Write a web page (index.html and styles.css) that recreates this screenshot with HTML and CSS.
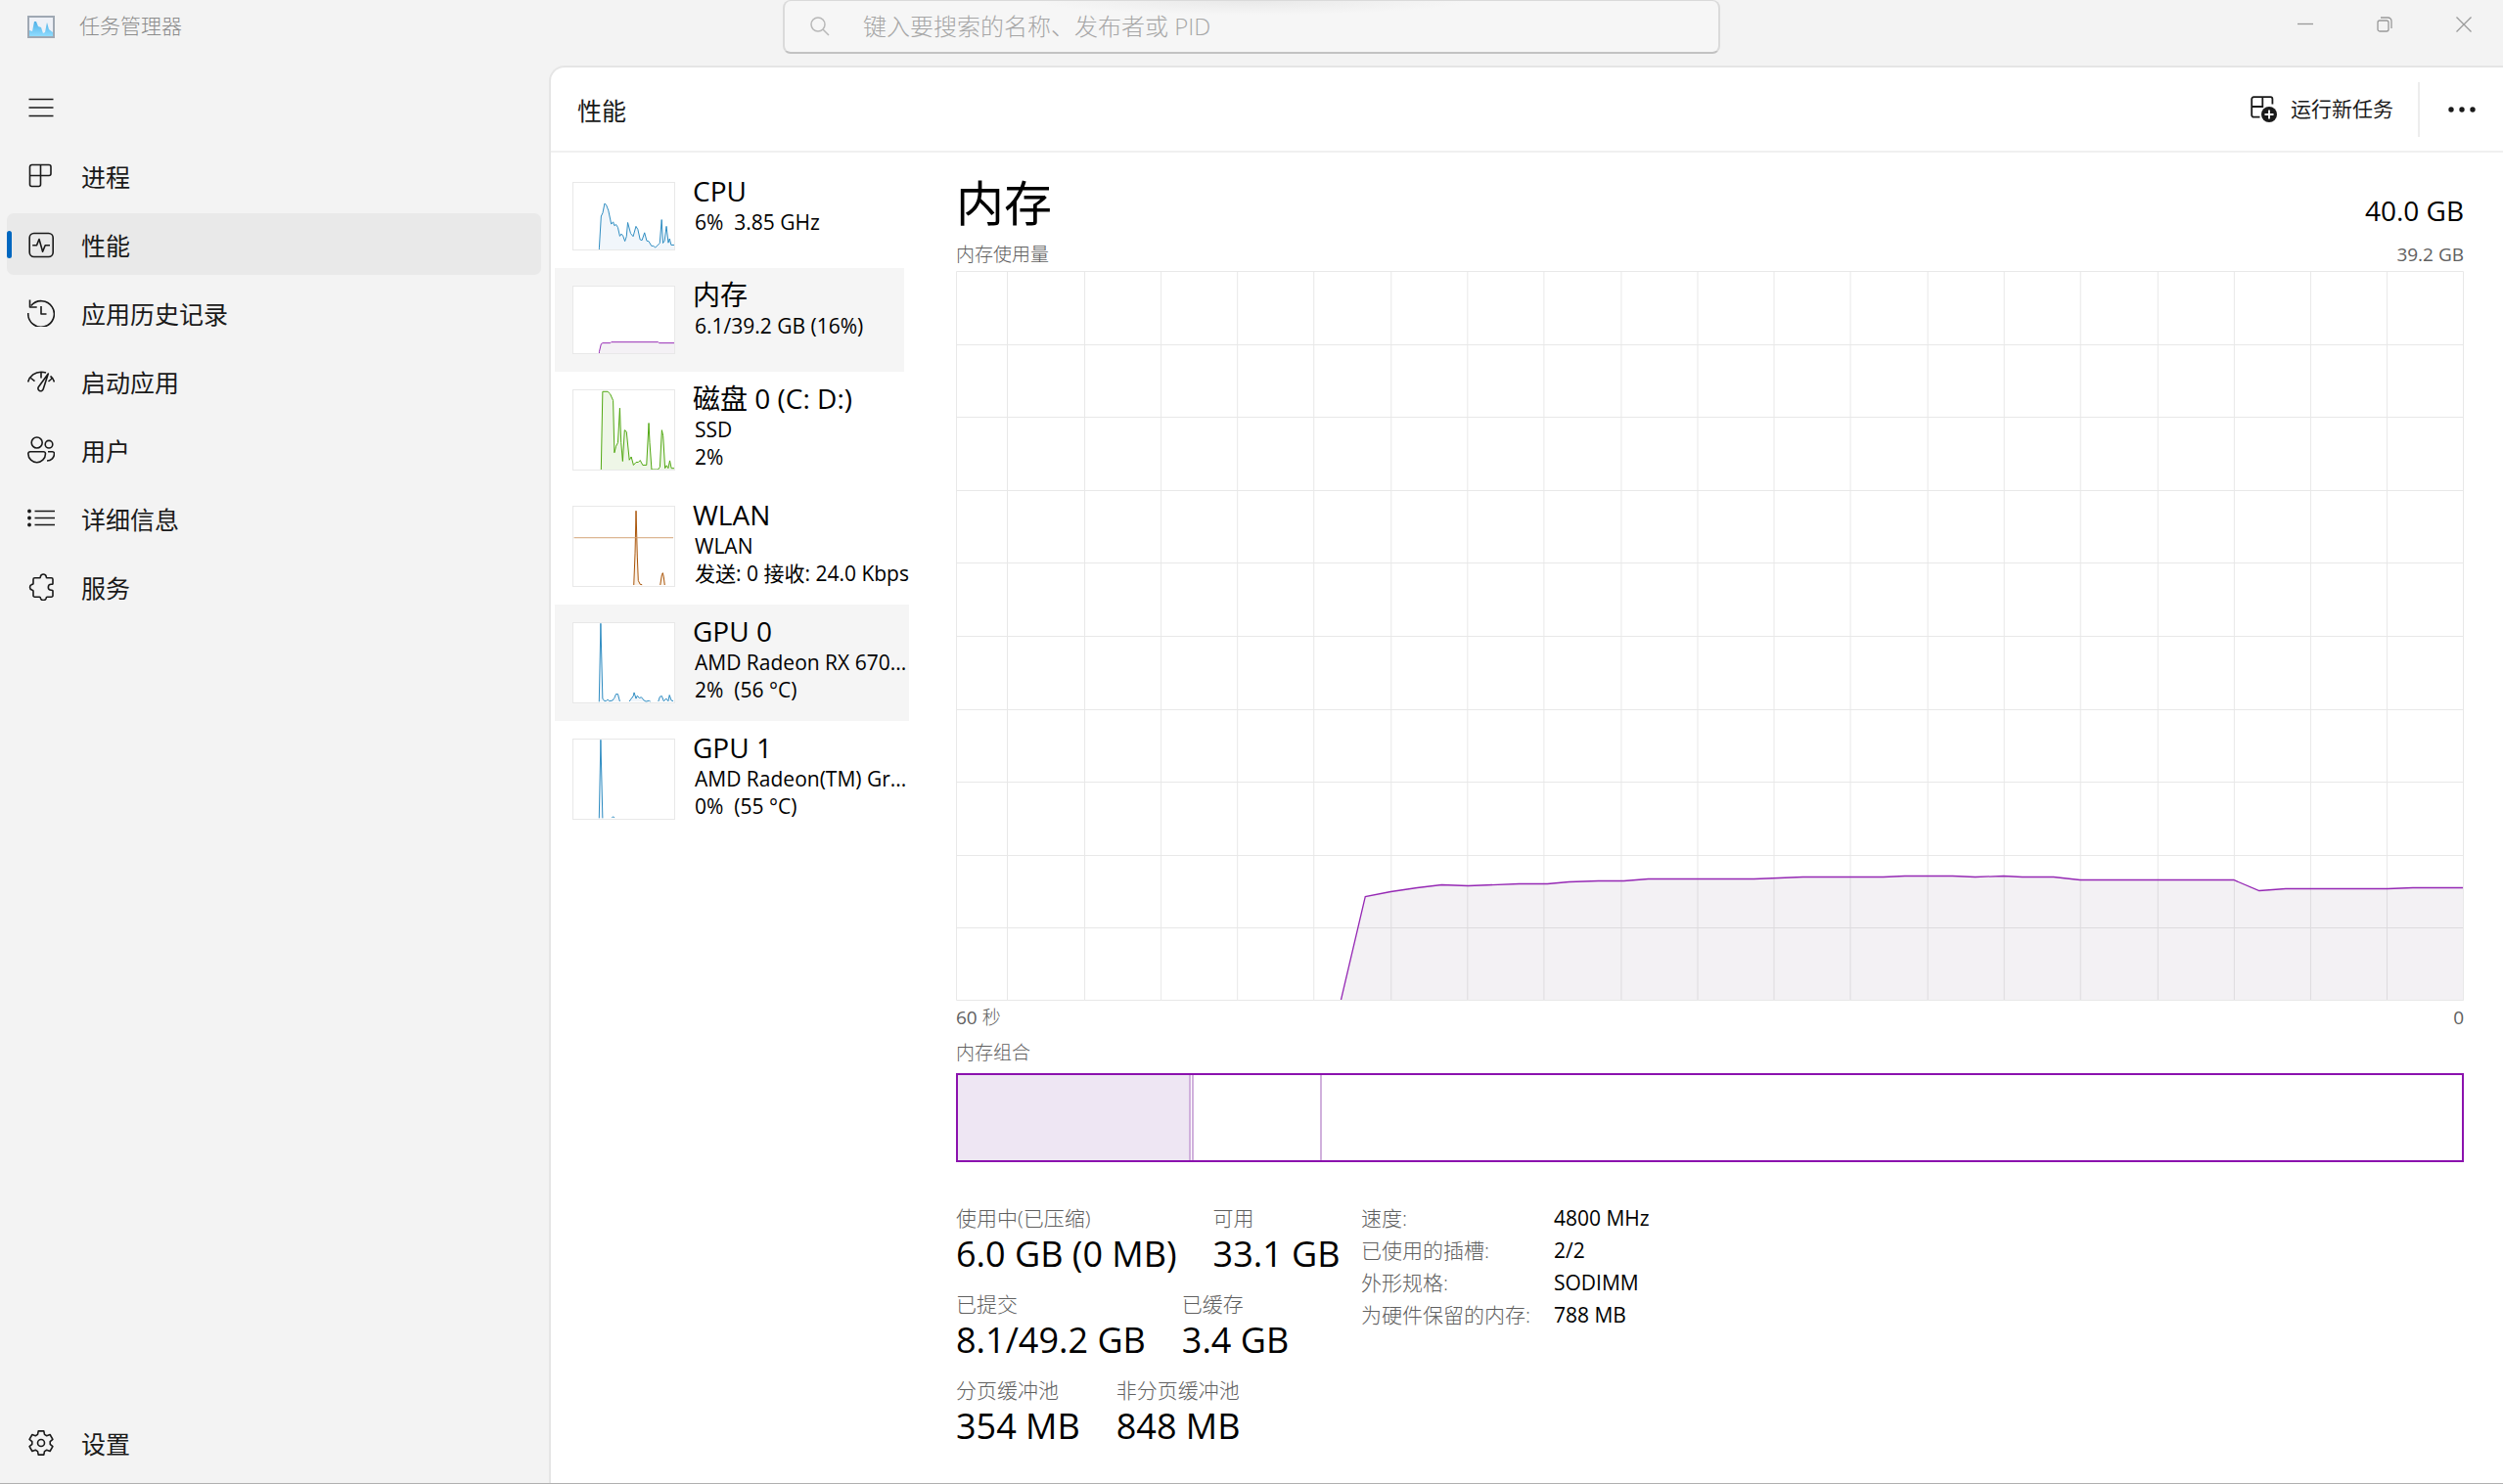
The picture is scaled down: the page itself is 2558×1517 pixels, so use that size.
FILE: index.html
```html
<!DOCTYPE html>
<html lang="zh-CN">
<head>
<meta charset="utf-8">
<meta name="viewport" content="width=device-width, initial-scale=1">
<title>任务管理器</title>
<link rel="stylesheet" href="styles.css">
</head>
<body>
<div class="window">
  <header class="titlebar">
    <div class="brand">
      <svg class="brand-icon" viewBox="0 0 28 23" aria-hidden="true">
        <defs><linearGradient id="sky" x1="0" y1="0" x2="0" y2="1"><stop offset="0" stop-color="#4fb0e6"/><stop offset="1" stop-color="#8fdcff"/></linearGradient></defs>
        <rect x="1" y="1" width="26" height="21" fill="#eef1f7" stroke="#9fa8b3" stroke-width="2"/>
        <path d="M2 15l3 1 2-10h2l2 5 3 1 2 6 2-1 2-10 2 7 4 3v4H2z" fill="url(#sky)"/>
      </svg>
      <span>任务管理器</span>
    </div>
    <label class="search">
      <svg class="search-icon" viewBox="0 0 20 20" aria-hidden="true"><circle cx="8" cy="8" r="7"/><path d="M13 13l6 6"/></svg>
      <input type="search" aria-label="搜索" placeholder="键入要搜索的名称、发布者或 PID">
    </label>
    <div class="caption">
      <button type="button" aria-label="最小化"><svg viewBox="0 0 16 16"><path d="M0 7.500H16"/></svg></button>
      <button type="button" aria-label="还原"><svg viewBox="0 0 16 16"><rect x="1" y="4" width="11" height="11" rx="2"/><path d="M4 1h7.500a3.500 3.500 0 0 1 3.500 3.500V12"/></svg></button>
      <button type="button" aria-label="关闭"><svg viewBox="0 0 16 16"><path d="M.5.5l15 15M15.500.5l-15 15"/></svg></button>
    </div>
  </header>

  <div class="body">
    <nav class="nav">
      <button type="button" class="nav-item" aria-label="导航"><svg viewBox="0 0 28 28"><path d="M1.500 5.500h25M1.500 14h25M1.500 22.500h25"/></svg></button>
      <a href="#" class="nav-item"><svg viewBox="0 0 28 28"><path d="M4.500 2.500H22a2 2 0 0 1 2 2v7a2 2 0 0 1-2 2H13.500v9a2 2 0 0 1-2 2h-7a2 2 0 0 1-2-2v-18a2 2 0 0 1 2-2zM13.500 2.500v11H2.500"/></svg><span>进程</span></a>
      <a href="#" class="nav-item active" aria-current="page"><svg viewBox="0 0 28 28"><rect x="2.200" y="2.500" width="24" height="24" rx="4.500"/><path d="M5.200 14.800h4.300L12 8.500l3.600 12.700 2.600-6.400H23"/></svg><span>性能</span></a>
      <a href="#" class="nav-item"><svg viewBox="0 0 28 28"><path d="M.8 14A13.300 13.300 0 1 0 3.800 6.500M2.500.6V8h7.200M14 7v8h5.500"/></svg><span>应用历史记录</span></a>
      <a href="#" class="nav-item"><svg viewBox="0 0 28 28"><path d="M.6 14.500C2.500 8 8 4.200 14 4.200c2 0 3.500.3 5 .8M3.500 10.500l4 3.200M14 4.500v6M21.300 6L11.400 19.500a2.700 2.700 0 1 0 4.800 2.300zM23.500 8.500c2 1.500 3.300 3.500 4 6M25 11l-3.500 3"/></svg><span>启动应用</span></a>
      <a href="#" class="nav-item"><svg viewBox="0 0 28 28"><circle cx="9.700" cy="6.500" r="5.500"/><circle cx="22" cy="8.200" r="3.800"/><path d="M2.800 15.800h13.700a2 2 0 0 1 2 2c0 5.200-4.300 8.900-8.800 8.900S.8 23 .8 17.800a2 2 0 0 1 2-2zM21 15.800h4.500a2 2 0 0 1 2 2c0 4-3 7.200-7.500 7.200"/></svg><span>用户</span></a>
      <a href="#" class="nav-item"><svg viewBox="0 0 28 28"><path d="M7.500 6.500H28M7.500 13.500H28M7.500 20.500H28"/><g class="solid"><circle cx="2" cy="6.500" r="1.900"/><circle cx="2" cy="13.500" r="1.900"/><circle cx="2" cy="20.500" r="1.900"/></g></svg><span>详细信息</span></a>
      <a href="#" class="nav-item"><svg viewBox="0 0 28 28"><path d="M7.500 4.800h5c1 0 .8-1 .9-1.600a3 3 0 0 1 5.800 0c.1.600-.1 1.600.9 1.600h4.400a1.500 1.500 0 0 1 1.500 1.500v4.200c0 1-1 .8-1.700.8a3 3 0 0 0 0 6c.7 0 1.700-.1 1.700.8v4.600a1.500 1.500 0 0 1-1.500 1.500h-4.400c-1 0-.9 1-1 1.500a3 3 0 0 1-5.600 0c-.1-.6 0-1.500-1-1.500h-5A1.500 1.500 0 0 1 6 22.700v-4.500c0-1-.8-.9-1.400-1.100a3 3 0 0 1 0-5.700c.6-.1 1.400 0 1.400-1V6.300a1.500 1.500 0 0 1 1.500-1.500z"/></svg><span>服务</span></a>
      <a href="#" class="nav-item settings"><svg viewBox="0 0 28 28"><circle cx="14" cy="14" r="3.500"/><path d="M16.800 1.900l.7 3.500 2.200 1.300 3.400-1.200 2.800 4.900-2.700 2.300v2.600l2.700 2.300-2.800 4.900-3.400-1.200-2.200 1.300-.7 3.500h-5.600l-.7-3.500-2.200-1.300-3.400 1.200-2.800-4.900 2.700-2.300v-2.600l-2.700-2.300 2.800-4.900 3.400 1.200 2.200-1.300.7-3.500z"/></svg><span>设置</span></a>
    </nav>

    <main class="panel">
      <header class="toolbar">
        <h1>性能</h1>
        <button type="button" class="run">
          <svg viewBox="0 0 28 28" aria-hidden="true"><path d="M9.500 21.700H3.200a2 2 0 0 1-2-2V3.200a2 2 0 0 1 2-2h17.200a2 2 0 0 1 2 2V8.500M12.300 1.200V11H1.200"/><circle class="disc" cx="19" cy="19" r="8"/><path class="plus" d="M14.500 19h9M19 14.500v9"/></svg>
          <span>运行新任务</span>
        </button>
        <button type="button" class="more" aria-label="更多"><svg viewBox="0 0 28 6"><circle cx="3" cy="3" r="2.700"/><circle cx="14" cy="3" r="2.700"/><circle cx="25" cy="3" r="2.700"/></svg></button>
      </header>

      <div class="content">
        <div class="devices">
          <button type="button" class="device cpu">
            <svg class="thumb" viewBox="75 108 315 210"><path d="M155 314L161 213 166 203 172 173 177 177 184 195 193 238 199 231 203 243 208 239 214 249 220 276 225 269 230 275 236 292 241 277 245 233 254 267 262 277 271 245 277 255 284 287 290 289 298 265 305 291 311 292 320 307 326 307 332 312 346 298 352 224 356 298 361 291 367 245 373 297 377 284 382 304 396 304 396 330 155 330z"/></svg>
            <span class="info"><b>CPU</b><span>6%&nbsp; 3.85 GHz</span></span>
          </button>
          <button type="button" class="device mem selected">
            <svg class="thumb" viewBox="75 426 315 210"><path d="M155 632L161 607 166 604 190 604 193 601 341 601 344 604 399 604 399 650 155 650z"/></svg>
            <span class="info"><b>内存</b><span>6.1/39.2 GB (16%)</span></span>
          </button>
          <button type="button" class="device disk">
            <svg class="thumb tall" viewBox="75 744 315 249"><path d="M161 1005L166 748 182 748 190 756 199 776 203 940 208 920 214 908 220 800 224 908 229 967 235 869 241 874 250 963 256 953 263 979 271 970 278 970 284 964 292 979 304 979 311 847 314 908 320 993 340 993 346 985 352 869 356 887 362 989 367 980 372 989 377 965 382 989 398 989 398 1005z"/></svg>
            <span class="info"><b>磁盘 0 (C: D:)</b><span>SSD</span><span>2%</span></span>
          </button>
          <button type="button" class="device net">
            <svg class="thumb tall" viewBox="75 51 315 249"><path d="M264 297L268 196 271 64 275 208 278 283 284 295 290 296M347 297L352 265 355 259 358 272 361 297"/><path class="rate" d="M76 148.500H388"/></svg>
            <span class="info"><b>WLAN</b><span>WLAN</span><span>发送: 0 接收: 24.0 Kbps</span></span>
          </button>
          <button type="button" class="device gpu hover">
            <svg class="thumb tall" viewBox="75 408 315 249"><path d="M155 655L160 409 166 645 172 653 178 652 182 648 187 653 197 651 203 643 208 631 214 631 220 654M250 654L256 645 262 638 265 626 271 645 275 636 281 643 288 641 296 651 302 654 312 652 316 654M341 654L346 639 352 637 358 653 366 645 372 653 376 634 382 651 388 653"/></svg>
            <span class="info"><b>GPU 0</b><span>AMD Radeon RX 670...</span><span>2%&nbsp; (56 °C)</span></span>
          </button>
          <button type="button" class="device gpu">
            <svg class="thumb tall" viewBox="75 765 315 249"><path d="M155 1012L160 766 166 1012M195 1011L199 1007 203 1011"/></svg>
            <span class="info"><b>GPU 1</b><span>AMD Radeon(TM) Gr...</span><span>0%&nbsp; (55 °C)</span></span>
          </button>
        </div>

        <section class="detail">
          <div class="pair heading"><h2>内存</h2><span>40.0 GB</span></div>
          <div class="pair caption-row"><span class="cjk">内存使用量</span><span>39.2 GB</span></div>
          <svg class="chart" viewBox="0 0 1540 746" preserveAspectRatio="none" role="img" aria-label="内存使用量">
            <path class="grid" d="M52.500 0V746M131.500 0V746M209.500 0V746M287.500 0V746M365.500 0V746M444.500 0V746M522.500 0V746M600.500 0V746M679.500 0V746M757.500 0V746M835.500 0V746M913.500 0V746M992.500 0V746M1070.500 0V746M1148.500 0V746M1227.500 0V746M1305.500 0V746M1383.500 0V746M1461.500 0V746M0 75.500H1540M0 149.500H1540M0 224.500H1540M0 298.500H1540M0 373.500H1540M0 448.500H1540M0 522.500H1540M0 597.500H1540M0 671.500H1540"/>
            <path class="area" d="M393 746L418 639.500 444 634.500 471 630.500 496 627.500 523 628.500 575 626.500 604 626.500 626 624.500 656 623.500 682 623.500 707 621.500 815 621.500 865 619.500 947 619.500 969 618.500 1018 618.500 1041 619.500 1070 618.500 1089 619.500 1121 619.500 1148 622.500 1305 622.500 1331 633.500 1358 631.500 1462 631.500 1488 630.500 1540 630.500V746z"/>
            <path class="line" d="M393 746L418 639.500 444 634.500 471 630.500 496 627.500 523 628.500 575 626.500 604 626.500 626 624.500 656 623.500 682 623.500 707 621.500 815 621.500 865 619.500 947 619.500 969 618.500 1018 618.500 1041 619.500 1070 618.500 1089 619.500 1121 619.500 1148 622.500 1305 622.500 1331 633.500 1358 631.500 1462 631.500 1488 630.500 1540 630.500"/>
            <rect class="grid" x=".5" y=".5" width="1539" height="745"/>
          </svg>
          <div class="pair axis"><span>60 <span class="cjk">秒</span></span><span>0</span></div>
          <div class="caption-row cjk">内存组合</div>
          <div class="composition"><i class="used"></i><i class="modified"></i><i class="standby"></i><i></i></div>
          <div class="stats">
            <div class="totals">
              <dl><div><dt>使用中(已压缩)</dt><dd>6.0 GB (0 MB)</dd></div><div><dt>可用</dt><dd>33.1 GB</dd></div></dl>
              <dl><div><dt>已提交</dt><dd>8.1/49.2 GB</dd></div><div><dt>已缓存</dt><dd>3.4 GB</dd></div></dl>
              <dl><div><dt>分页缓冲池</dt><dd>354 MB</dd></div><div><dt>非分页缓冲池</dt><dd>848 MB</dd></div></dl>
            </div>
            <dl class="specs">
              <dt>速度:</dt><dd>4800 MHz</dd>
              <dt>已使用的插槽:</dt><dd>2/2</dd>
              <dt>外形规格:</dt><dd>SODIMM</dd>
              <dt>为硬件保留的内存:</dt><dd>788 MB</dd>
            </dl>
          </div>
        </section>
      </div>
    </main>
  </div>
</div>
</body>
</html>
```
FILE: styles.css
```css
* { box-sizing: border-box; }

body {
  margin: 0;
  background: #f3f3f3;
  color: #1a1a1a;
  font-family: "Open Sans", "Noto Sans CJK SC", sans-serif;
  font-size: 21px;
}

button, input { font: inherit; color: inherit; }
button { border: 0; padding: 0; background: none; }
h1, h2, dl, dd { margin: 0; font-weight: 400; }
svg { display: block; flex: none; fill: none; }

.window {
  display: flex;
  flex-direction: column;
  min-height: 100vh;
  border-bottom: 1px solid #b0b0b0;
}

/* Title bar */
.titlebar {
  display: grid;
  grid-template-columns: 1fr minmax(0, 958px) 1fr;
  height: 67px;
  align-items: start;
}
.brand {
  display: flex;
  align-items: center;
  gap: 25px;
  height: 54px;
  padding-left: 28px;
  color: #8c8c8c;
  font-weight: 300;
}
.brand span { line-height: 28px; padding-bottom: 2px; }
.brand-icon { width: 28px; height: 23px; }
.search {
  display: flex;
  align-items: center;
  gap: 34px;
  height: 55px;
  padding: 0 26px;
  border: 2px solid #dadada;
  border-top-width: 1px;
  border-bottom: 2px solid #c2c2c2;
  border-radius: 8px;
  background: radial-gradient(ellipse 220px 14px at 50% 0, #e9e9e9, #f6f6f6);
}
.search-icon { width: 20px; height: 20px; stroke: #b8b8b8; stroke-width: 1.5; }
.search input {
  flex: 1;
  min-width: 0;
  border: 0;
  padding: 0 0 2px;
  background: none;
  outline: 0;
  font-size: 24px;
  font-weight: 300;
}
.search input::placeholder { color: #a6a6a6; opacity: 1; }
.caption { display: flex; justify-content: flex-end; }
.caption button { display: grid; place-items: center; width: 81px; height: 49px; }
.caption svg { width: 16px; height: 16px; stroke: #999; stroke-width: 1.3; }

.body { display: flex; flex: 1; }

/* Side navigation */
.nav {
  display: flex;
  flex-direction: column;
  gap: 7px;
  width: 561px;
  flex: none;
  padding: 11px 8px 10px 7px;
}
.nav-item {
  position: relative;
  display: flex;
  align-items: center;
  gap: 27px;
  height: 63px;
  padding: 0 21px;
  border-radius: 7px;
  color: #1a1a1a;
  font-size: 25px;
  text-decoration: none;
}
.nav-item svg { width: 28px; height: 28px; stroke: #1a1a1a; stroke-width: 1.6; stroke-linejoin: round; }
.nav-item .solid { fill: #1a1a1a; stroke: none; }
.nav-item.active { background: #e9e9e9; }
.nav-item.active::before {
  content: "";
  position: absolute;
  left: 0;
  width: 5px;
  height: 28px;
  border-radius: 3px;
  background: #0067c0;
}
.settings { margin-top: auto; }

/* Main panel */
.panel {
  display: flex;
  flex-direction: column;
  flex: 1;
  min-width: 0;
  border: 2px solid #e5e5e5;
  border-width: 2px 0 0 2px;
  border-radius: 16px 0 0 0;
  background: #fff;
}
.toolbar {
  display: flex;
  align-items: center;
  height: 87px;
  padding-left: 27px;
  border-bottom: 2px solid #f0f0f0;
}
.toolbar h1 { flex: 1; font-size: 25px; }
.run { display: flex; align-items: center; gap: 13px; height: 56px; padding: 0 25px 0 24px; border-right: 2px solid #ededed; }
.run span { line-height: 28px; padding-bottom: 2px; }
.run svg { width: 28px; height: 28px; stroke: #1a1a1a; stroke-width: 1.8; }
.run .disc { fill: #1a1a1a; stroke: none; }
.run .plus { stroke: #fff; }
.more { display: grid; place-items: center; width: 85px; height: 56px; }
.more svg { width: 28px; height: 6px; fill: #1a1a1a; }

.content { display: flex; flex: 1; color: #000; }

/* Device list */
.devices { width: 366px; flex: none; padding: 12px 0 0 4px; }
.device {
  display: flex;
  align-items: flex-start;
  gap: 18px;
  width: 100%;
  padding: 18px 0 18px 18px;
  text-align: left;
}
.device.selected { width: 357px; background: #f5f5f5; }
.device.hover { background: #f5f5f5; }
.thumb {
  width: 105px;
  height: 70px;
  border: 1px solid #e8e8e8;
  background: #fff;
  stroke-width: 3;
  stroke-linejoin: round;
}
.thumb.tall { height: 83px; }
.cpu .thumb, .gpu .thumb { stroke: #2a8ac0; fill: #f1f6fb; }
.mem .thumb { stroke: #9528b4; fill: #f4f1f5; }
.disk .thumb { stroke: #4da60c; fill: #eef6e7; }
.net .thumb { stroke: #a74f01; fill: #fbf3ea; }
.net .rate { stroke: #d3a274; }
.info {
  flex: 1;
  min-width: 0;
  height: 70px;
  margin-top: -8px;
}
.info b, .info span { display: block; line-height: 28px; white-space: nowrap; }
.info b { font-size: 28px; line-height: 35px; font-weight: 400; }
.info span { padding-left: 2px; }

/* Memory detail */
.detail {
  display: flex;
  flex-direction: column;
  flex: 1;
  min-width: 0;
  padding: 22px 40px 37px 48px;
}
.pair { display: flex; justify-content: space-between; align-items: baseline; }
.heading { font-size: 28px; line-height: 58px; height: 69px; }
.heading h2 { font-size: 49px; }
.caption-row, .axis { font-size: 19px; line-height: 26px; color: #606060; }
.cjk, .stats dt { font-weight: 300; }
.chart { flex: 1 1 0; width: 100%; min-height: 300px; margin: 4px 0; }
.chart path, .chart rect { vector-effect: non-scaling-stroke; }
.chart .grid { stroke: #e8e8e8; }
.chart .area { fill: #6b4a78; fill-opacity: .08; }
.chart .line { stroke: #9528b4; stroke-width: 1.3; }
.axis { margin-bottom: 10px; }
.composition {
  display: flex;
  height: 91px;
  margin-top: 8px;
  border: 2px solid #8b12ae;
}
.composition i { border-right: 2px solid #d0b0dc; }
.composition i:last-child { flex: 1; border: 0; }
.composition .used { flex: 0 0 238px; background: #eee6f3; }
.composition .modified { flex: 0 0 3px; }
.composition .standby { flex: 0 0 131px; }

.stats { display: flex; margin-top: 42px; }
.totals { display: flex; flex-direction: column; gap: 15px; width: 414px; flex: none; }
.totals dl { display: flex; gap: 37px; white-space: nowrap; }
.stats dt { color: #606060; line-height: 31px; }
.totals dd { font-size: 36px; line-height: 42px; }
.specs { display: grid; grid-template-columns: 197px auto; align-content: start; row-gap: 2px; }
.specs dt, .specs dd { line-height: 31px; white-space: nowrap; }
```
